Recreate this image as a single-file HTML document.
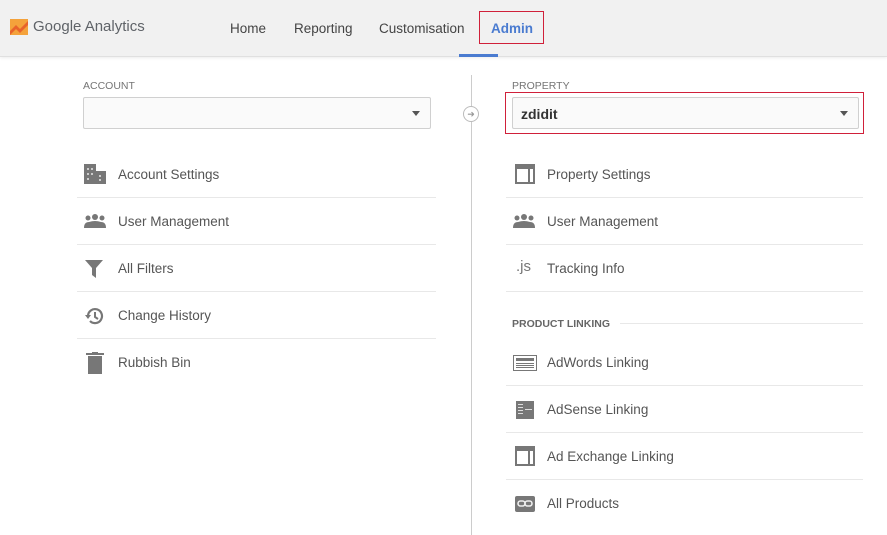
<!DOCTYPE html>
<html><head><style>
body{margin:0;width:887px;height:535px;background:#fff;font-family:"Liberation Sans",Arial,sans-serif;position:relative;overflow:hidden}
.hdr{position:absolute;left:0;top:0;width:887px;height:56px;background:#f1f1f1;border-bottom:1px solid #e0e0e0;box-shadow:0 1px 3px rgba(0,0,0,.08)}
.a{position:absolute}
.nav{position:absolute;top:21px;font-size:13.5px;color:#444}
.lbl{position:absolute;font-size:10.5px;color:#757575}
.sel{position:absolute;height:32px;border:1px solid #d0d0d0;border-radius:2px;background:#fafafa;box-sizing:border-box}
.tri{position:absolute;right:10px;top:13px;width:0;height:0;border-left:4px solid transparent;border-right:4px solid transparent;border-top:5px solid #555}
.item{position:absolute;height:47px;font-size:13.5px;color:#555;box-sizing:border-box}
.item span{position:absolute;left:41px;top:16px}
.item svg{position:absolute;left:7px;top:13px}
.sep{position:absolute;height:1px;background:#e8e8e8}
</style></head><body>
<div class="hdr"></div>
<svg class="a" style="left:10px;top:19px" width="18" height="16" viewBox="0 0 18 16"><rect width="18" height="16" fill="#f4a23b"/><path d="M0 12 L6 6 L10 10 L18 2 L18 6 L10 14 L6 10 L0 16Z" fill="#e8632b"/></svg>
<div class="a" style="left:33px;top:18px;font-size:15px;color:#5f6368">Google Analytics</div>
<div class="nav" style="left:230px">Home</div>
<div class="nav" style="left:294px">Reporting</div>
<div class="nav" style="left:379px">Customisation</div>
<div class="a" style="left:479px;top:11px;width:63px;height:31px;border:1px solid #d0203a"></div>
<div class="nav" style="left:491px;color:#4a7bd0;font-weight:bold">Admin</div>
<div class="a" style="left:459px;top:54px;width:39px;height:3px;background:#4a7bd0"></div>

<div class="lbl" style="left:83px;top:80px">ACCOUNT</div>
<div class="sel" style="left:83px;top:97px;width:348px"><div class="tri"></div></div>
<div class="a" style="left:471px;top:75px;width:1px;height:460px;background:#ccc"></div>
<div class="a" style="left:463px;top:106px;width:14px;height:14px;border:1px solid #bbb;border-radius:50%;background:#fff;color:#999;font-size:9px;text-align:center;line-height:14px">➜</div>

<div class="lbl" style="left:512px;top:80px">PROPERTY</div>
<div class="a" style="left:505px;top:92px;width:357px;height:40px;border:1px solid #d0203a"></div>
<div class="sel" style="left:512px;top:97px;width:347px"><div class="tri"></div><div class="a" style="left:8px;top:8px;font-size:14px;font-weight:bold;color:#333">zdidit</div></div>

<div class="item" style="left:77px;top:151px;width:359px"><svg width="22" height="20" viewBox="0 0 22 20"><rect x="0" y="0" width="12" height="20" fill="#777"/><rect x="12" y="7" width="10" height="13" fill="#777"/><g fill="#ccc"><rect x="3" y="4" width="2" height="2"/><rect x="7" y="4" width="2" height="2"/><rect x="3" y="9" width="2" height="2"/><rect x="7" y="9" width="2" height="2"/><rect x="3" y="14" width="2" height="2"/><rect x="15" y="11" width="2" height="2"/><rect x="15" y="15" width="2" height="2"/></g></svg><span>Account Settings</span></div>
<div class="sep" style="left:77px;top:197px;width:359px"></div>
<div class="item" style="left:77px;top:198px;width:359px"><svg width="22" height="16" viewBox="0 0 22 16" style="top:16px"><g fill="#777"><circle cx="4" cy="4" r="2.5"/><circle cx="11" cy="3" r="3"/><circle cx="18" cy="4" r="2.5"/><path d="M0 14 Q0 8 5 8 Q11 6 17 8 Q22 8 22 14Z"/></g></svg><span>User Management</span></div>
<div class="sep" style="left:77px;top:244px;width:359px"></div>
<div class="item" style="left:77px;top:245px;width:359px"><svg width="20" height="18" viewBox="0 0 20 18" style="top:15px"><path d="M1 0H19L12 8V18L8 15V8Z" fill="#777"/></svg><span>All Filters</span></div>
<div class="sep" style="left:77px;top:291px;width:359px"></div>
<div class="item" style="left:77px;top:292px;width:359px"><svg width="20" height="20" viewBox="0 0 20 20" style="top:14px"><path d="M4 10 A7 7 0 1 1 6 15" fill="none" stroke="#777" stroke-width="2.2"/><path d="M1 9 H7 L4 13Z" fill="#777"/><path d="M11 6 V11 L14 13" fill="none" stroke="#777" stroke-width="2"/></svg><span>Change History</span></div>
<div class="sep" style="left:77px;top:338px;width:359px"></div>
<div class="item" style="left:77px;top:339px;width:359px"><svg width="20" height="22" viewBox="0 0 20 22" style="top:13px;left:9px"><rect x="2" y="4" width="14" height="18" fill="#777"/><rect x="0" y="1" width="18" height="2" fill="#777"/><rect x="6" y="0" width="6" height="2" fill="#777"/></svg><span>Rubbish Bin</span></div>

<div class="item" style="left:506px;top:151px;width:357px"><svg width="20" height="20" viewBox="0 0 20 20" style="left:9px"><rect x="1" y="1" width="18" height="18" fill="none" stroke="#777" stroke-width="2"/><rect x="1" y="1" width="18" height="4" fill="#777"/><rect x="13" y="5" width="2" height="14" fill="#777"/></svg><span>Property Settings</span></div>
<div class="sep" style="left:506px;top:197px;width:357px"></div>
<div class="item" style="left:506px;top:198px;width:357px"><svg width="22" height="16" viewBox="0 0 22 16" style="top:16px"><g fill="#777"><circle cx="4" cy="4" r="2.5"/><circle cx="11" cy="3" r="3"/><circle cx="18" cy="4" r="2.5"/><path d="M0 14 Q0 8 5 8 Q11 6 17 8 Q22 8 22 14Z"/></g></svg><span>User Management</span></div>
<div class="sep" style="left:506px;top:244px;width:357px"></div>
<div class="item" style="left:506px;top:245px;width:357px"><div class="a" style="left:10px;top:13px;font-size:15px;color:#777">.js</div><span>Tracking Info</span></div>
<div class="sep" style="left:506px;top:291px;width:357px"></div>
<div class="a" style="left:512px;top:318px;font-size:10.5px;font-weight:bold;color:#666">PRODUCT LINKING</div>
<div class="sep" style="left:620px;top:323px;width:243px"></div>
<div class="item" style="left:506px;top:339px;width:357px"><svg width="24" height="16" viewBox="0 0 24 16" style="top:16px"><rect x="0.5" y="0.5" width="23" height="15" fill="none" stroke="#777"/><g fill="#777"><rect x="3" y="3" width="18" height="3"/><rect x="3" y="8" width="18" height="1"/><rect x="3" y="10" width="18" height="1"/><rect x="3" y="12" width="18" height="1"/></g></svg><span>AdWords Linking</span></div>
<div class="sep" style="left:506px;top:385px;width:357px"></div>
<div class="item" style="left:506px;top:386px;width:357px"><svg width="18" height="18" viewBox="0 0 18 18" style="left:10px;top:15px"><rect width="18" height="18" fill="#777"/><g fill="#ddd"><rect x="2" y="3" width="5" height="1"/><rect x="2" y="6" width="5" height="1"/><rect x="2" y="9" width="5" height="1"/><rect x="2" y="12" width="5" height="1"/><rect x="9" y="8" width="7" height="1"/></g></svg><span>AdSense Linking</span></div>
<div class="sep" style="left:506px;top:432px;width:357px"></div>
<div class="item" style="left:506px;top:433px;width:357px"><svg width="20" height="20" viewBox="0 0 20 20" style="left:9px"><rect x="1" y="1" width="18" height="18" fill="none" stroke="#777" stroke-width="2"/><rect x="1" y="1" width="18" height="4" fill="#777"/><rect x="13" y="5" width="2" height="14" fill="#777"/></svg><span>Ad Exchange Linking</span></div>
<div class="sep" style="left:506px;top:479px;width:357px"></div>
<div class="item" style="left:506px;top:480px;width:357px"><svg width="20" height="16" viewBox="0 0 20 16" style="left:9px;top:16px"><rect width="20" height="16" rx="2" fill="#777"/><g fill="none" stroke="#eee" stroke-width="1.6"><rect x="3" y="5" width="7" height="5" rx="2.5"/><rect x="10" y="5" width="7" height="5" rx="2.5"/></g></svg><span>All Products</span></div>
</body></html>
